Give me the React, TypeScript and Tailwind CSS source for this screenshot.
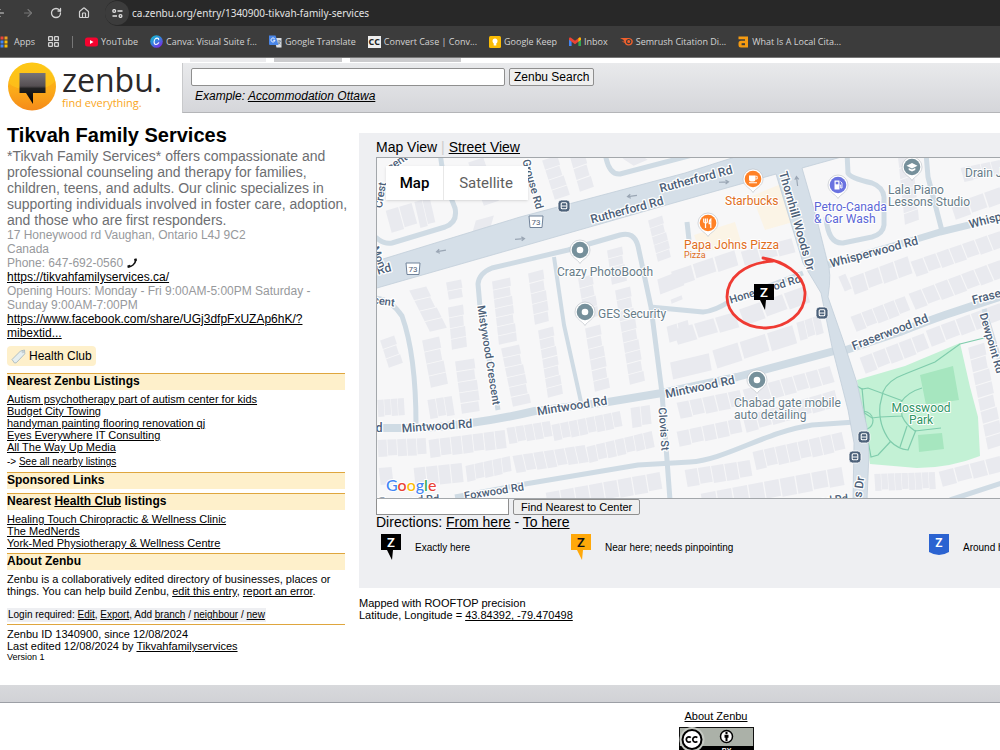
import React from "react";
import { ArrowLeft, ArrowRight, RotateCw, House, LayoutGrid } from "lucide-react";

type Pt = [number, number];

/* ---------- Browser chrome ---------- */

const AppsIcon = () => (
  <svg width="12" height="12" viewBox="0 0 12 12" className="-ml-1 shrink-0">
    {["#e8453c", "#e8453c", "#f0a020", "#34a853", "#4285f4", "#fbbc05", "#34a853", "#4285f4", "#fbbc05"].map((c, i) => (
      <rect key={i} x={(i % 3) * 4 + 0.5} y={Math.floor(i / 3) * 4 + 0.5} width="3" height="3" fill={c} />
    ))}
  </svg>
);

const YouTubeIcon = () => (
  <svg width="13" height="12" viewBox="0 0 13 12">
    <rect y="1.5" width="13" height="9" rx="2.5" fill="#f6032f" />
    <path d="M5 4v4l3.5-2z" fill="#fff" />
  </svg>
);

const CanvaIcon = () => (
  <svg width="13" height="13" viewBox="0 0 13 13">
    <defs>
      <linearGradient id="canva" x1="0" y1="0" x2="0.7" y2="1">
        <stop offset="0" stopColor="#13c4cf" />
        <stop offset="0.5" stopColor="#3187dc" />
        <stop offset="1" stopColor="#7a2be8" />
      </linearGradient>
    </defs>
    <circle cx="6.5" cy="6.5" r="6.3" fill="url(#canva)" />
    <path d="M8.7 4.6c0-1-.6-1.5-1.5-1.5-1.700 0-3.100 2-3.100 4 0 1.400.700 2.400 1.900 2.400 1.100 0 2-.6 2.700-1.700" fill="none" stroke="#fff" strokeWidth="1.100" strokeLinecap="round" />
  </svg>
);

const TranslateIcon = () => (
  <svg width="13" height="13" viewBox="0 0 13 13">
    <path d="M5 3h7.500v9.500H7.500z" fill="#dcdfe3" />
    <path d="M0 .5h6.500L9.500 10H1a1 1 0 0 1-1-1z" fill="#4a86e8" />
    <path d="M5.700 3.900A2 2 0 1 0 6 5.300H4.200" fill="none" stroke="#fff" strokeWidth=".9" />
    <path d="M8.500 6h3.500M10.200 5v1M11.300 6c-.3 1.500-1.200 2.500-2.400 3.200M9.200 7.200c.5.900 1.300 1.600 2.300 2" fill="none" stroke="#5f7287" strokeWidth=".7" />
  </svg>
);

const ConvertIcon = () => (
  <span className="flex h-3 w-[13px] items-center justify-center bg-[#eeeeee] text-[9px] leading-none font-bold text-[#222]">CC</span>
);

const KeepIcon = () => (
  <svg width="12" height="12" viewBox="0 0 12 12">
    <rect width="12" height="12" rx="1.500" fill="#fbbc04" />
    <circle cx="6" cy="5" r="2.500" fill="#fff" />
    <rect x="4.700" y="7" width="2.600" height="2.500" fill="#fff" />
  </svg>
);

const GmailIcon = () => (
  <svg width="12" height="10" viewBox="0 0 12 10">
    <path d="M0 2v7h2.600V3z" fill="#4285f4" />
    <path d="M12 2v7H9.400V3z" fill="#34a853" />
    <path d="M0 1.600C0 .4 1.200.2 2 .8l4 3 4-3c.8-.6 2-.4 2 .8v1.200L6 7.200 0 2.800z" fill="#ea4335" />
    <path d="M9.400 1.200 10 .8c.8-.6 2-.4 2 .8v1.200L9.400 4.700z" fill="#fbbc04" />
  </svg>
);

const SemrushIcon = () => (
  <svg width="13" height="9" viewBox="0 0 13 9">
    <path d="M0 1h7c3.500-.5 5.800 1 5.800 3.500S11 8.500 8.600 8.500 5 7.300 4.600 5.800L1.500 4.500h3L3.300 2.800 0 1z" fill="#f2602c" />
    <circle cx="8.700" cy="4.600" r="2.100" fill="none" stroke="#3c3c3c" strokeWidth="1.200" />
  </svg>
);

const LetterIcon = () => (
  <svg width="11" height="12" viewBox="0 0 11 12">
    <path d="M.5 .5H10V11.500H3Q.5 11.500 .5 9V7.300Q.5 4.800 3 4.800H7V3.300H.5z" fill="#f59b12" />
    <path d="M3.600 7.200H7V9.200H3.600z" fill="#3c3c3c" />
  </svg>
);

const bookmarks: { label: string; icon: React.ReactNode }[] = [
  { label: "YouTube", icon: <YouTubeIcon /> },
  { label: "Canva: Visual Suite f...", icon: <CanvaIcon /> },
  { label: "Google Translate", icon: <TranslateIcon /> },
  { label: "Convert Case | Conv...", icon: <ConvertIcon /> },
  { label: "Google Keep", icon: <KeepIcon /> },
  { label: "Inbox", icon: <GmailIcon /> },
  { label: "Semrush Citation Di...", icon: <SemrushIcon /> },
  { label: "What Is A Local Cita...", icon: <LetterIcon /> },
];

function BrowserBar() {
  return (
    <div className="border-b border-[#777] bg-[#3c3c3c] font-['Noto_Sans',sans-serif] text-[#d3d3d3]">
      <div className="flex h-[26px] items-center">
        <div className="flex w-[105px] shrink-0 items-center gap-4">
          <button aria-label="Back" className="-ml-1.5"><ArrowLeft size={12} strokeWidth={2.2} /></button>
          <button aria-label="Forward" className="text-[#777]"><ArrowRight size={12} strokeWidth={2.2} /></button>
          <button aria-label="Reload"><RotateCw size={12} strokeWidth={2.6} /></button>
          <button aria-label="Home"><House size={12} strokeWidth={2.4} /></button>
        </div>
        <div className="flex h-[26px] min-w-0 flex-1 items-center gap-[3px] rounded-l-full bg-[#282828]">
          <span className="flex size-6 shrink-0 items-center justify-center rounded-full bg-[#3c3c3c]">
            <svg width="11" height="9" viewBox="0 0 11 9" fill="none" stroke="#e3e3e3" strokeWidth="1.300">
              <circle cx="2.200" cy="2" r="1.400" />
              <path d="M5.500 2h5M.5 7H5" />
              <circle cx="8.500" cy="7" r="1.400" />
            </svg>
          </span>
          <input
            aria-label="Address"
            className="min-w-0 flex-1 bg-transparent text-[10px] text-[#e3e3e3] outline-none"
            defaultValue="ca.zenbu.org/entry/1340900-tikvah-family-services"
          />
        </div>
      </div>
      <nav className="flex h-[31px] items-center gap-3 overflow-hidden font-['Open_Sans',sans-serif] text-[9px] whitespace-nowrap">
        <a href="#apps" className="flex items-center gap-1.5"><AppsIcon />Apps</a>
        <LayoutGrid size={13} strokeWidth={2.4} className="shrink-0" />
        <span className="h-3 w-px bg-[#777]" />
        {bookmarks.map((b) => (
          <a key={b.label} href="#bookmark" className="flex items-center gap-[3px]">
            {b.icon}
            {b.label}
          </a>
        ))}
      </nav>
    </div>
  );
}

/* ---------- Site header ---------- */

const ZenbuMark = () => (
  <svg width="48" height="50" viewBox="0 0 48 50" className="shrink-0">
    <defs>
      <linearGradient id="ball" x1="0" y1="0" x2="0" y2="1">
        <stop offset="0" stopColor="#fdc010" />
        <stop offset="0.6" stopColor="#fba919" />
        <stop offset="1" stopColor="#f58a1a" />
      </linearGradient>
      <linearGradient id="bubble" x1="0" y1="0" x2="0" y2="1">
        <stop offset="0" stopColor="#777377" />
        <stop offset="0.42" stopColor="#554f52" />
        <stop offset="0.5" stopColor="#222" />
        <stop offset="1" stopColor="#000" />
      </linearGradient>
    </defs>
    <circle cx="24" cy="24.500" r="24" fill="url(#ball)" />
    <path d="M1 21C8 30 38 31 47 19 46 8 37 1 24 1S2 9 1 21z" fill="#ffd21c" opacity=".45" />
    <path d="M11.500 11h26v20H25v11l-7-11h-6.500z" fill="url(#bubble)" />
  </svg>
);

function Header() {
  return (
    <header className="flex gap-[21px] pl-2">
      <a href="#home" className="flex w-[153px] shrink-0 gap-1.5 pt-1">
        <ZenbuMark />
        <span className="flex flex-col font-['Open_Sans',sans-serif]">
          <span className="text-[32px] leading-9 font-medium text-[#2b292a]">zenbu.</span>
          <span className="-mt-px text-[11px] leading-3 font-medium text-[#f9a61c]">find everything.</span>
        </span>
      </a>
      <div className="min-w-0 flex-1">
        <div className="flex h-[5px] gap-2 pl-2">
          <span className="h-1 w-[76px] bg-[#ececee]" />
          <span className="h-1 w-[68px] bg-[#cbcbcd]" />
          <span className="h-1 w-[111px] bg-[#cbcbcd]" />
        </div>
        <form className="h-[50px] border-b border-l border-b-[#b4b5b8] border-l-[#c8c9cb] bg-linear-to-b from-[#e9eaec] to-[#d5d6da] pt-[5px] pl-2">
          <div className="flex gap-1">
            <input aria-label="Search" className="h-[18px] w-[314px] rounded-xs border border-[#8f8f8f] bg-white px-1 text-xs" />
            <button type="button" className="h-[18px] rounded-xs border border-[#8f8f8f] bg-[#efefef] px-1 text-[12px] leading-4">Zenbu Search</button>
          </div>
          <p className="mt-0.5 pl-1 text-[12px] leading-4 italic">
            Example: <a href="#ottawa" className="underline">Accommodation Ottawa</a>
          </p>
        </form>
      </div>
    </header>
  );
}

/* ---------- Left column ---------- */

const SectionTitle = ({ children }: { children: React.ReactNode }) => (
  <h2 className="mt-1 h-[17px] border-t border-[#dfa63e] bg-[#fef0cb] text-[12px] leading-[14px] font-bold">{children}</h2>
);

const LinkList = ({ items }: { items: string[] }) => (
  <ul className="mt-[3px] text-[11px] leading-3">
    {items.map((t) => (
      <li key={t}><a href="#listing" className="underline">{t}</a></li>
    ))}
  </ul>
);

const Link = ({ children }: { children: React.ReactNode }) => (
  <a href="#link" className="underline">{children}</a>
);

function EntryDetails() {
  return (
    <section className="w-[338px] shrink-0">
      <h1 className="pb-0.5 text-[20px] leading-[22px] font-bold">Tikvah Family Services</h1>
      <p className="-mr-2 text-[14px] leading-4 text-[#6d6e71]">
        *Tikvah Family Services* offers compassionate and professional counseling and therapy for families, children,
        teens, and adults. Our clinic specializes in supporting individuals involved in foster care, adoption, and those
        who are first responders.
      </p>
      <div className="text-[12px] leading-[14px] text-[#97999c]">
        <p>17 Honeywood rd Vaughan, Ontario L4J 9C2<br />Canada</p>
        <p className="flex items-center gap-1">
          Phone: 647-692-0560
          <svg width="10" height="10" viewBox="0 0 10 10">
            <path d="M.5 8.800C4 9.500 9 6 8.800 1" fill="none" stroke="#111" strokeWidth="1.500" />
            <path d="M.3 7.500 3 6.800l1 1.700-2.500 1.300zM7 1l2.500-.8.3 2.800-2 .8z" fill="#111" />
          </svg>
        </p>
        <p className="text-black"><Link>https://tikvahfamilyservices.ca/</Link></p>
        <p>Opening Hours: Monday - Fri 9:00AM-5:00PM Saturday - Sunday 9:00AM-7:00PM</p>
        <p className="text-black"><Link>https://www.facebook.com/share/UGj3dfpFxUZAp6hK/?<br />mibextid...</Link></p>
      </div>
      <div className="mt-1.5 mb-[7px] flex">
        <span className="flex h-5 items-center gap-[3px] rounded bg-[#fef0cb] px-1 text-[12px]">
          <svg width="15" height="15" viewBox="0 0 15 15">
            <path d="M1 10.500 9.500 2l4-1 .3 3.800-8.600 9-1.700.2z" fill="#e5eef0" stroke="#a9b9be" strokeWidth=".9" />
            <circle cx="11.800" cy="3" r=".8" fill="#fff" stroke="#8d9da2" strokeWidth=".5" />
          </svg>
          Health Club
        </span>
      </div>
      <SectionTitle>Nearest Zenbu Listings</SectionTitle>
      <LinkList
        items={[
          "Autism psychotherapy part of autism center for kids",
          "Budget City Towing",
          "handyman painting flooring renovation qj",
          "Eyes Everywhere IT Consulting",
          "All The Way Up Media",
        ]}
      />
      <p className="mt-[3px] text-[10px] leading-3">-&gt; <Link>See all nearby listings</Link></p>
      <SectionTitle>Sponsored Links</SectionTitle>
      <SectionTitle>Nearest <Link>Health Club</Link> listings</SectionTitle>
      <LinkList items={["Healing Touch Chiropractic & Wellness Clinic", "The MedNerds", "York-Med Physiotherapy & Wellness Centre"]} />
      <SectionTitle>About Zenbu</SectionTitle>
      <p className="mt-[3px] text-[11px] leading-3">
        Zenbu is a collaboratively edited directory of businesses, places or things. You can help build Zenbu,{" "}
        <Link>edit this entry</Link>, <Link>report an error</Link>.
      </p>
      <div className="mt-[11px] mb-0.5 flex">
        <p className="bg-[#eeeff2] px-px text-[10px] leading-[14px]">
          Login required: <Link>Edit</Link>, <Link>Export</Link>, Add <Link>branch</Link> / <Link>neighbour</Link> / <Link>new</Link>
        </p>
      </div>
      <div className="border-t border-[#dfa63e] pt-[3px] text-[11px] leading-3">
        <p>Zenbu ID 1340900, since 12/08/2024</p>
        <p>Last edited 12/08/2024 by <Link>Tikvahfamilyservices</Link></p>
        <p className="text-[9px] leading-[10px]">Version 1</p>
      </div>
    </section>
  );
}

/* ---------- Map ---------- */

/* Rows of buildings: start point, end point, depth vector, number of houses */
const buildingRows: [Pt, Pt, Pt, number][] = [
  [[385, 211], [412, 203], [6, 22], 2],
  [[414, 202], [430, 198], [6, 26], 2],
  [[468, 162], [484, 206], [15, -5], 4],
  [[472, 234], [476, 220], [18, -5], 1],
  [[542, 160], [555, 200], [15, -5], 4],
  [[570, 157], [580, 192], [14, -5], 3],
  [[622, 158], [634, 166], [14, -6], 1],
  [[409, 290], [430, 332], [17, -4], 4],
  [[422, 340], [431, 388], [17, -4], 4],
  [[446, 282], [449, 300], [15, -3], 2],
  [[448, 307], [452, 350], [15, -3], 4],
  [[455, 361], [462, 414], [19, -3], 5],
  [[492, 281], [499, 345], [18, -4], 7],
  [[501, 348], [513, 407], [18, -4], 6],
  [[528, 273], [535, 325], [15, -4], 5],
  [[538, 330], [548, 398], [15, -4], 7],
  [[578, 278], [585, 320], [14, -4], 4],
  [[585, 328], [595, 392], [15, -4], 6],
  [[607, 250], [612, 285], [15, -4], 4],
  [[615, 290], [630, 385], [15, -4], 9],
  [[380, 340], [389, 368], [14, -5], 3],
  [[377, 400], [404, 398], [1, 17], 4],
  [[427, 400], [452, 396], [3, 19], 3],
  [[648, 220], [658, 262], [14, -5], 5],
  [[666, 327], [688, 320], [3, 16], 2],
  [[656, 280], [682, 270], [3, 15], 1],
  [[670, 300], [682, 295], [1, 4], 1],
  [[377, 440], [426, 438], [1, 17], 5],
  [[428, 440], [505, 430], [2, 18], 7],
  [[506, 428], [550, 421], [3, 16], 5],
  [[551, 425], [620, 411], [3, 16], 8],
  [[630, 408], [650, 405], [2, 20], 2],
  [[378, 468], [392, 467], [2, 17], 1],
  [[413, 468], [462, 463], [2, 19], 4],
  [[465, 466], [510, 456], [2, 16], 5],
  [[512, 456], [585, 445], [4, 17], 7],
  [[586, 447], [652, 431], [3, 16], 7],
  [[545, 493], [660, 472], [3, 18], 8],
  [[676, 403], [740, 390], [4, 16], 5],
  [[742, 390], [830, 366], [5, 16], 7],
  [[676, 432], [740, 418], [3, 15], 5],
  [[742, 417], [835, 390], [4, 16], 7],
  [[684, 470], [750, 460], [3, 17], 5],
  [[752, 452], [842, 432], [4, 18], 8],
  [[700, 494], [842, 467], [3, 18], 9],
  [[670, 272], [735, 250], [4, 15], 3],
  [[740, 252], [792, 238], [4, 14], 3],
  [[672, 330], [735, 312], [5, 15], 3],
  [[738, 310], [805, 286], [6, 16], 3],
  [[668, 363], [710, 353], [3, 17], 1],
  [[711, 351], [793, 325], [5, 18], 3],
  [[796, 323], [820, 315], [4, 18], 3],
  [[838, 276], [845, 292], [7, -3], 1],
  [[849, 278], [908, 256], [5, 17], 4],
  [[910, 262], [1000, 231], [6, 15], 7],
  [[850, 317], [905, 296], [6, 15], 5],
  [[908, 294], [1000, 260], [7, 16], 7],
  [[859, 358], [924, 333], [6, 16], 5],
  [[925, 331], [1000, 303], [6, 16], 5],
  [[960, 168], [1000, 160], [4, 14], 4],
  [[950, 205], [1000, 187], [5, 15], 3],
  [[898, 157], [905, 225], [14, -5], 6],
  [[968, 347], [988, 450], [16, -5], 8],
  [[874, 474], [935, 472], [1, 17], 9],
  [[938, 472], [1000, 456], [4, 15], 4],
];

const houses: Pt[][] = buildingRows.flatMap(([a, b, d, n]) =>
  Array.from({ length: n }, (_, i) => {
    const at = (t: number): Pt => [a[0] + (b[0] - a[0]) * t, a[1] + (b[1] - a[1]) * t];
    const p = at((i + 0.05) / n);
    const q = at((i + 0.97) / n);
    const k = i % 3 === 1 ? 0.93 : 1;
    return [p, q, [q[0] + d[0] * k, q[1] + d[1] * k], [p[0] + d[0] * k, p[1] + d[1] * k]] as Pt[];
  }),
);

const roads: [string, number][] = [
  ["M440 150C442 178 448 190 455 208Q458 222 445 227L392 243Q384 245 374 236", 5],
  ["M605 152Q608 175 620 174L700 153", 5],
  ["M374 298Q390 298 402 316Q416 355 416 425", 5],
  ["M498 410L480 307L478 284Q479 273 492 268L568 250L620 235Q634 231 638 246L651 307L662 393L670 500", 5],
  ["M554 257L564 325L581 402", 4],
  ["M650 307L703 312Q715 311 730 301L803 273", 5],
  ["M374 428H425Q480 424 535 411L608 402L662 393L737 377L838 350", 8],
  ["M455 497L525 484L638 465L690 462C725 460 765 432 812 425L855 422", 5],
  ["M828 265L917 239L940 232L1002 217", 7],
  ["M847 153L848 173Q850 178 872 183Q883 187 884 197L884 225Q883 234 872 237L843 243Q828 244 826 217", 5],
  ["M926 153L928 177L942 231", 5],
  ["M687 222L689 240", 5],
  ["M840 352L900 332Q925 322 945 315L1002 296", 8],
  ["M984 309L1000 362", 5],
  ["M950 500L1002 483", 5],
];

const parkPaths = [
  "M988 337L960 344L935 362L905 374Q888 380 883 392L880 405Q878 425 890 441Q898 449 908 450L916 430",
  "M857 386L862 389L868 388L903 401",
  "M922 388Q908 392 901 402L902 416L880 417L872 418L863 412",
  "M902 416Q906 425 915 431L941 428M907 426L900 447M862 388L866 430L871 457L878 455L891 441M863 411Q872 412 873 420Q873 427 867 429",
];

const roadLabels: { t: string; x: number; y: number; r: number; s?: number }[] = [
  { t: "Rutherford Rd", x: 627, y: 210, r: -15, s: 12 },
  { t: "Rutherford Rd", x: 696, y: 179, r: -15, s: 12 },
  { t: "Rd", x: 384, y: 269, r: -15, s: 12 },
  { t: "Grouse Rd", x: 533, y: 184, r: 74, s: 11 },
  { t: "Mistywood Crescent", x: 489, y: 355, r: 81, s: 11 },
  { t: "Mintwood Rd", x: 437, y: 426, r: -4, s: 12 },
  { t: "Mintwood Rd", x: 572, y: 406, r: -9, s: 12 },
  { t: "Mintwood Rd", x: 700, y: 387, r: -12, s: 12 },
  { t: "d", x: 379, y: 428, r: 0, s: 12 },
  { t: "Clovis St", x: 664, y: 429, r: 86, s: 11 },
  { t: "Foxwood Rd", x: 494, y: 491, r: -9, s: 11 },
  { t: "Foxwood Rd", x: 409, y: 500, r: -3, s: 11 },
  { t: "Foxwood Rd", x: 818, y: 501, r: -6, s: 11 },
  { t: "Thornhill Woods Dr", x: 797, y: 221, r: 74, s: 12 },
  { t: "s Dr", x: 859, y: 487, r: -82, s: 12 },
  { t: "Whisperwood Rd", x: 874, y: 252, r: -15, s: 12 },
  { t: "Whisperwood Rd", x: 1013, y: 213, r: -15, s: 12 },
  { t: "Fraserwood Rd", x: 890, y: 332, r: -21, s: 12 },
  { t: "Fraserwood Rd", x: 1011, y: 290, r: -15, s: 12 },
  { t: "Dewpoint Rd", x: 992, y: 343, r: 74, s: 11 },
  { t: "Honeywood Rd", x: 765, y: 289, r: -17, s: 11 },
  { t: "cent", x: 384, y: 301, r: 8, s: 11 },
  { t: "cent", x: 397, y: 162, r: -35, s: 11 },
  { t: "Crest", x: 380, y: 195, r: -80, s: 11 },
  { t: "Mon", x: 379, y: 257, r: 68, s: 11 },
];

const Pin = ({ x, y, color, children }: { x: number; y: number; color: string; children?: React.ReactNode }) => (
  <g transform={`translate(${x} ${y})`}>
    <path d="M0 13.500C-2 9.500-10 7-10 0a10 10 0 0 1 20 0C10 7 2 9.500 0 13.500z" fill="#fff" stroke="#b9bec4" strokeWidth=".6" />
    <circle r="8.300" fill={color} />
    {children ?? <circle r="3.300" fill="#fff" />}
  </g>
);

const BusStop = ({ x, y }: { x: number; y: number }) => (
  <g transform={`translate(${x} ${y})`}>
    <rect x="-6" y="-6" width="12" height="12" rx="3.500" fill="#4b6079" stroke="#fff" strokeWidth=".8" />
    <rect x="-2.800" y="-3.200" width="5.600" height="6" rx="1" fill="none" stroke="#fff" strokeWidth="1.100" />
    <path d="M-2.500 0h5M-1.800 3.800h.1M1.700 3.800h.1" stroke="#fff" strokeWidth="1" />
  </g>
);

const RouteShield = ({ x, y }: { x: number; y: number }) => (
  <g transform={`translate(${x} ${y})`}>
    <path d="M-7-6H7L6 5.500H-6z" fill="#fff" stroke="#71839a" />
    <text y="3" fontSize="8" textAnchor="middle" fill="#4f6074">73</text>
  </g>
);

const Arrow = ({ x, y, r }: { x: number; y: number; r: number }) => (
  <path d="M-5 0H4M1.500-2 4.500 0 1.500 2" transform={`translate(${x} ${y}) rotate(${r})`} fill="none" stroke="#9aa6b4" strokeWidth="1.200" />
);

const Poi = ({ x, y, color, lines, anchor = "start" }: { x: number; y: number; color: string; lines: string[]; anchor?: "start" | "middle" }) => (
  <g fill={color} fontSize="12" textAnchor={anchor} stroke="#fff" strokeWidth="2" paintOrder="stroke" strokeLinejoin="round">
    {lines.map((l, i) => (
      <text key={l} x={x} y={y + i * 12}>{l}</text>
    ))}
  </g>
);

const ZMarker = ({ fill, letter }: { fill: string; letter: string }) => (
  <>
    <path d="M0 0h20v16h-8l-1 10-5-10H0z" fill={fill} />
    <text x="10" y="12.500" fontSize="13" fontWeight="600" textAnchor="middle" fill={letter} fontFamily="Roboto, sans-serif">Z</text>
  </>
);

function MapCanvas() {
  return (
    <svg
      viewBox="377 158 623 340"
      preserveAspectRatio="xMinYMin slice"
      className="block h-[340px] w-full"
      fontFamily="Roboto, sans-serif"
      role="img"
      aria-label="Map of Vaughan around Honeywood Rd"
    >
      <rect x="376" y="157" width="624" height="342" fill="#f7f7f8" />
      <path d="M752 196L781 184L793 222L765 230zM694 235L735 222L742 245L700 252z" fill="#fbf4e6" />
      {houses.map((h, i) => (
        <polygon key={i} points={h.map((p) => p.join(",")).join(" ")} fill="#e9eaef" />
      ))}
      <path d="M857 380L905 366L960 343L970 387L978 417L980 456Q950 468 917 468L870 464z" fill="#c3f1d5" />
      <path d="M920 375L953 366L959 400L926 405zM918 435L942 433L944 449L919 452z" fill="#a6e6bf" />
      {parkPaths.map((d) => (
        <path key={d} d={d} fill="none" stroke="#7fccac" strokeWidth="1.200" />
      ))}
      {roads.map(([d, w]) => (
        <path key={d} d={d} fill="none" stroke="#cfdbe4" strokeWidth={w} strokeLinejoin="round" />
      ))}
      <path
        d="M370 263L520 217L685 173L735 157V150H845V156L802 168L817 220L827 260Q832 272 828 297L843 340L857 383L867 427L869 453L867 500H853L854 443L848 410L832 347L821 293L803 263L776 174L670 204L520 247L370 290z"
        fill="#d5dfe8"
        stroke="#c2ced9"
        strokeWidth=".8"
      />
      <Arrow x={441} y={251} r={170} />
      <Arrow x={520} y={239} r={-5} />
      <Arrow x={632} y={196} r={172} />
      <Arrow x={724} y={182} r={-3} />
      <Arrow x={797} y={181} r={-97} />
      <g fill="#4c6078" fontWeight="500" textAnchor="middle" stroke="#fff" strokeWidth="2.500" strokeLinejoin="round" paintOrder="stroke">
        {roadLabels.map((l, i) => (
          <text key={i} y="4" fontSize={l.s} transform={`translate(${l.x} ${l.y}) rotate(${l.r})`}>{l.t}</text>
        ))}
      </g>
      <RouteShield x={536} y={222} />
      <RouteShield x={413} y={269} />
      <BusStop x={564} y={206} />
      <BusStop x={822} y={313} />
      <BusStop x={864} y={437} />
      <BusStop x={855} y={457} />
      <Pin x={580} y={250} color="#76909b" />
      <Pin x={585} y={312} color="#76909b" />
      <Pin x={757} y={380} color="#76909b" />
      <Pin x={753} y={179} color="#ff8126">
        <path d="M-4-3.500H2.500V.5Q2.500 2.500.5 2.500H-2Q-4 2.500-4 .5zM-4 3.300H4V4.300H-4z" fill="#fff" />
        <path d="M2.500-2.700H4.200V0H2.500" fill="none" stroke="#fff" strokeWidth=".9" />
      </Pin>
      <Pin x={708} y={223} color="#ff8126">
        <path d="M-2.500 5V-4.500M-4.300-4.500V-1.500Q-4.300 0-2.500 0T-.7-1.500V-4.500M2.800 5V-4Q1 -3 1.200 .7H2.800" fill="none" stroke="#fff" strokeWidth="1.200" />
      </Pin>
      <Pin x={838} y={185} color="#6a73e0">
        <path d="M-3.500-4.500H1.500V4.500H-3.500z" fill="#fff" />
        <path d="M-2.300-3.200H.3V-.7H-2.300z" fill="#6a73e0" />
        <path d="M1.500 0H2.700V3H4V-2L2.500-3.500" fill="none" stroke="#fff" strokeWidth=".9" />
      </Pin>
      <Pin x={912} y={167} color="#76909b">
        <path d="M0-4 5.500-1.300 0 1.500-5.500-1.300zM-3.300 .9 0 2.600 3.300 .9V3L0 4.600-3.300 3z" fill="#fff" />
      </Pin>
      <Poi x={557} y={276} color="#677c88" lines={["Crazy PhotoBooth"]} />
      <Poi x={598} y={318} color="#677c88" lines={["GES Security"]} />
      <Poi x={734} y={407} color="#677c88" lines={["Chabad gate mobile", "auto detailing"]} />
      <Poi x={888} y={194} color="#677c88" lines={["Lala Piano", "Lessons Studio"]} />
      <Poi x={965} y={177} color="#677c88" lines={["Drain Joe"]} />
      <Poi x={814} y={211} color="#5b66d6" lines={["Petro-Canada", "& Car Wash"]} />
      <Poi x={921} y={412} color="#2f9565" anchor="middle" lines={["Mosswood", "Park"]} />
      <Poi x={725} y={205} color="#df6e1d" lines={["Starbucks"]} />
      <Poi x={684} y={249} color="#df6e1d" lines={["Papa Johns Pizza"]} />
      <text x="684" y="258" fontSize="9" fill="#df6e1d">Pizza</text>
      <g transform="translate(754 284)"><ZMarker fill="#000" letter="#fff" /></g>
      <path
        d="M763 258C782 261 803 272 805 292C806 314 786 327 766 328C744 328 727 314 727 297C727 278 744 263 773 261"
        fill="none"
        stroke="#ef3b33"
        strokeWidth="2.800"
        strokeLinecap="round"
      />
      <text x="386" y="491" fontSize="16" fontWeight="500" stroke="#fff" strokeWidth="2" paintOrder="stroke" fontFamily="Lato, sans-serif">
        <tspan fill="#4285f4">G</tspan><tspan fill="#ea4335">o</tspan><tspan fill="#fbbc05">o</tspan><tspan fill="#4285f4">g</tspan><tspan fill="#34a853">l</tspan><tspan fill="#ea4335">e</tspan>
      </text>
    </svg>
  );
}

/* ---------- Right column ---------- */

const LegendItem = ({ icon, label, className }: { icon: React.ReactNode; label: string; className: string }) => (
  <li className={`flex shrink-0 items-center gap-[14px] whitespace-nowrap ${className}`}>
    <svg width="20" height="27" viewBox="0 0 20 27" className="shrink-0">{icon}</svg>
    {label}
  </li>
);

function MapPanel() {
  return (
    <section className="min-w-0 flex-1 pt-[9px]">
      <div className="h-[455px] overflow-hidden bg-[#eeeff2] pt-1.5 pl-[17px]">
        <p className="pb-px text-[14px] leading-[17px]">
          Map View <span className="text-[#ccc]">|</span> <a href="#street" className="underline">Street View</a>
        </p>
        <div className="relative border-t border-l border-[#a3a7ab]">
          <MapCanvas />
          <div className="absolute top-2 left-[9px] flex h-[34px] bg-white font-['Roboto',sans-serif] text-[15px] shadow-sm">
            <button className="w-[58px] border-r border-[#e8e8e8] font-medium">Map</button>
            <button className="w-[84px] text-[#5f5f5f]">Satellite</button>
          </div>
        </div>
        <div className="flex gap-1 border-t border-[#a3a7ab]">
          <input aria-label="Search center" className="h-4 w-[133px] border border-t-0 border-[#8f8f8f] bg-white px-1 text-xs" />
          <button className="h-4 rounded-xs border border-[#8f8f8f] bg-[#efefef] px-[7px] text-[11px] leading-[14px]">Find Nearest to Center</button>
        </div>
        <p className="text-[14px] leading-[14px]">
          Directions: <Link>From here</Link> - <Link>To here</Link>
        </p>
        <ul className="mt-[5px] flex pl-[5px] text-[10px]">
          <LegendItem className="w-[190px]" label="Exactly here" icon={<ZMarker fill="#000" letter="#fff" />} />
          <LegendItem className="w-[358px]" label="Near here; needs pinpointing" icon={<ZMarker fill="#ffa80a" letter="#111" />} />
          <LegendItem
            className="w-[190px]"
            label="Around here"
            icon={
              <>
                <path d="M0 0h20v18q-10 6-20 0z" fill="#2b63d1" />
                <text x="10" y="13" fontSize="12" fontWeight="600" textAnchor="middle" fill="#fff" fontFamily="Roboto, sans-serif">Z</text>
              </>
            }
          />
        </ul>
      </div>
      <p className="mt-[9px] text-[11px] leading-3">
        Mapped with ROOFTOP precision<br />
        Latitude, Longitude = <Link>43.84392, -79.470498</Link>
      </p>
    </section>
  );
}

function Footer() {
  return (
    <footer className="mt-[23px]">
      <div className="h-[18px] border-b border-[#9c9fa5] bg-linear-to-b from-[#d8d9dc] to-[#d1d2d6]" />
      <div className="flex min-w-[1432px] flex-col items-center gap-[5px] pt-[7px] text-[11px] leading-3">
        <Link>About Zenbu</Link>
        <a href="#license" aria-label="Creative Commons Attribution">
          <svg width="75" height="27" viewBox="0 0 75 27">
            <rect x=".5" y=".5" width="74" height="26" fill="#abb1a8" stroke="#111" />
            <path d="M0 19h75v8H0z" fill="#000" />
            <circle cx="13" cy="12.500" r="12.500" fill="#c5c9c2" />
            <circle cx="13" cy="12.500" r="9.500" fill="#fff" stroke="#000" strokeWidth="2" />
            <path d="M11.800 10.700a2.600 2.600 0 1 0 0 3.600M18.300 10.700a2.600 2.600 0 1 0 0 3.600" fill="none" stroke="#000" strokeWidth="1.700" />
            <circle cx="47.500" cy="9.500" r="6" fill="#fff" stroke="#000" strokeWidth="1.500" />
            <circle cx="47.500" cy="6" r="1.200" />
            <path d="M45.500 7.800h4v3h-1v3.300h-2v-3.300h-1z" />
            <text x="47.500" y="25.500" fontSize="7" fontWeight="700" textAnchor="middle" fill="#fff" fontFamily="Liberation Sans, sans-serif">BY</text>
          </svg>
        </a>
      </div>
    </footer>
  );
}

export default function App() {
  return (
    <div className="h-screen overflow-hidden bg-white font-['Liberation_Sans',Arial,sans-serif] text-black">
      <BrowserBar />
      <Header />
      <main className="flex gap-[14px] pt-[11px] pl-[7px]">
        <EntryDetails />
        <MapPanel />
      </main>
      <Footer />
    </div>
  );
}
